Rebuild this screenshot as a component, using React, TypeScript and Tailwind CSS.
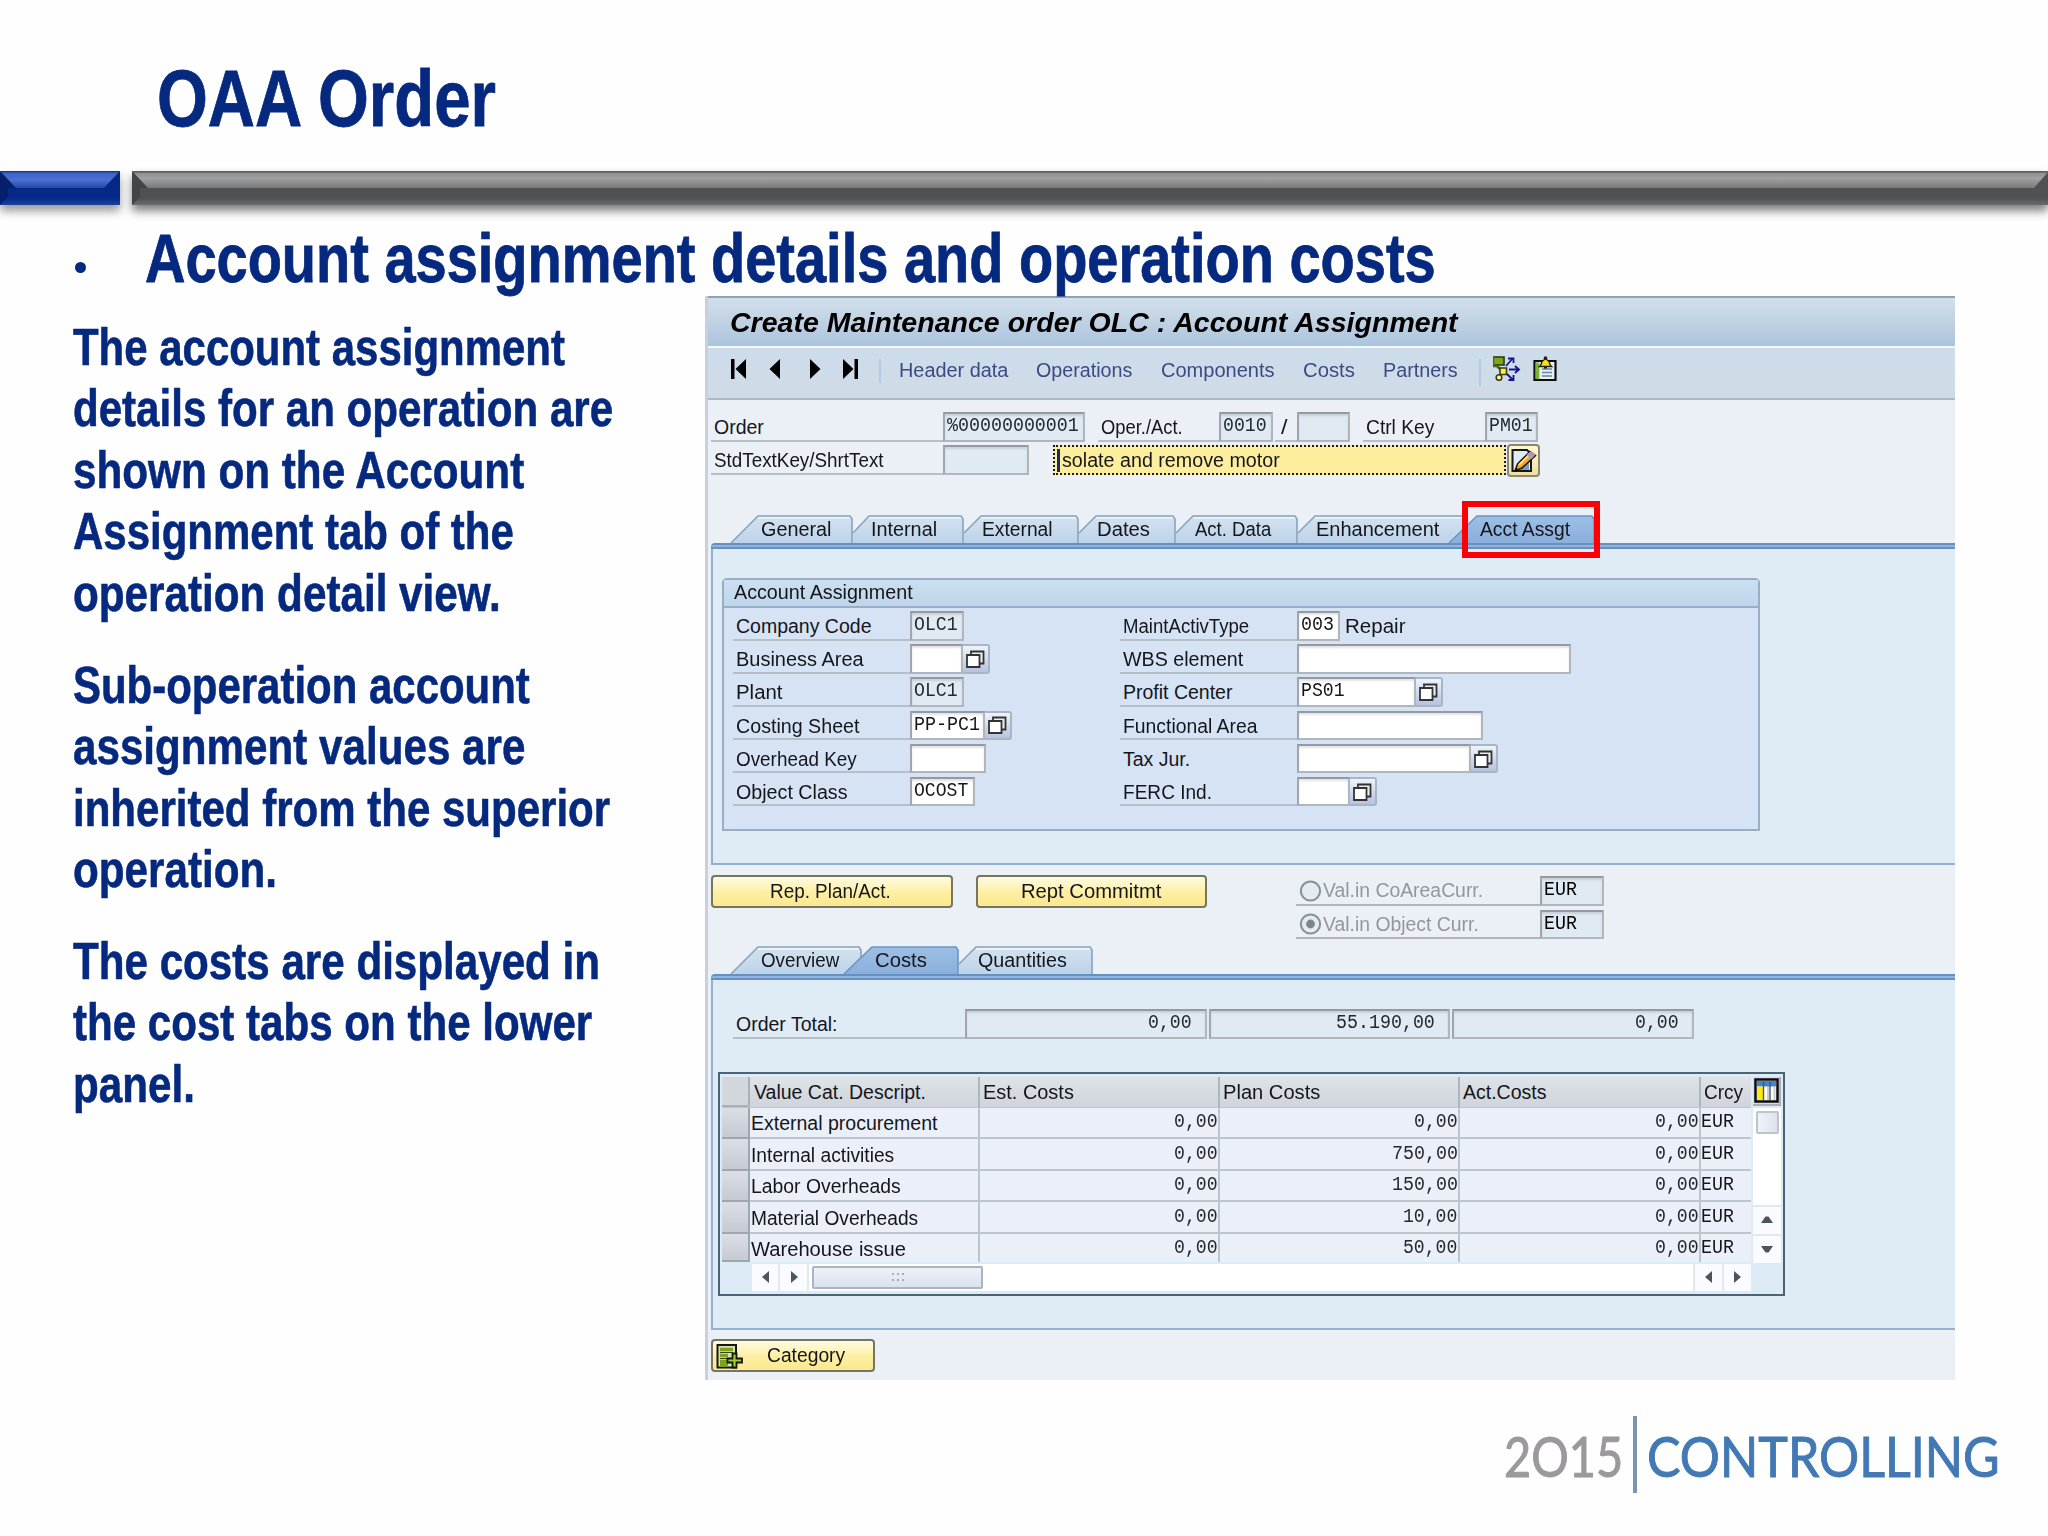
import { useLayoutEffect, useRef, useState, type ReactNode } from "react";

/* Text set to an exact advance width by scaling it horizontally. */
function Fit({ w, children, className = "" }: { w: number; children: ReactNode; className?: string }) {
  const ref = useRef<HTMLSpanElement>(null);
  const [scale, setScale] = useState(1);
  useLayoutEffect(() => {
    if (ref.current) setScale(w / ref.current.offsetWidth);
  }, [w]);
  return (
    <span className={`inline-block shrink-0 whitespace-nowrap ${className}`} style={{ width: w }}>
      <span ref={ref} className="inline-block origin-left" style={{ transform: `scaleX(${scale})` }}>
        {children}
      </span>
    </span>
  );
}

const MONO = "font-['Liberation_Mono',monospace]";

function Mono({ children }: { children: string }) {
  return (
    <Fit w={children.length * 10.95} className={`${MONO} text-[19.5px]`}>
      {children}
    </Fit>
  );
}

function Label({ text, w, className = "" }: { text: string; w: number; className?: string }) {
  return (
    <div className={`flex h-[29.5px] shrink-0 items-center border-b-2 border-[#b4bfc6] pt-[4px] pl-[3px] ${className}`}>
      <Fit w={w}>{text}</Fit>
    </div>
  );
}

function Field({ className = "", ro = false, children }: { className?: string; ro?: boolean; children?: ReactNode }) {
  return (
    <div
      className={`flex h-[29.5px] shrink-0 items-center border-2 border-[#b0b6bb] border-t-[#949a9f] border-l-[#a0a6ab] pl-[2px] ${
        ro ? "bg-[#dfeaf3] text-[#25282c]" : "bg-white"
      } shadow-[inset_0_2px_2px_rgba(90,100,110,0.18)] ${className}`}
    >
      {children}
    </div>
  );
}

function MatchButton() {
  return (
    <div className="flex h-[29.5px] w-[27px] shrink-0 items-center justify-center rounded-r-[3px] border-2 border-l-0 border-[#a9b4c4] bg-gradient-to-b from-[#eef4fa] to-[#b6c3df] pr-[2px]">
      <svg width="20" height="20" viewBox="0 0 20 20">
        <path d="M6 2.5H18.5V14.5H6Z" fill="#e9edf0" stroke="#333" strokeWidth="1.8" />
        <path d="M2 6H14.5V18H2Z" fill="#fff" stroke="#333" strokeWidth="1.8" />
      </svg>
    </div>
  );
}

type TabProps = {
  text: string;
  width: number;
  slant: number;
  cut?: number;
  pad: number;
  tw: number;
  active?: boolean;
  className?: string;
  children?: ReactNode;
};

function Tab({ text, width, slant, cut = 28, pad, tw, active, className = "", children }: TabProps) {
  return (
    <div className={`relative h-[28px] shrink-0 ${className}`} style={{ width }}>
      <svg className="absolute top-0 left-0 overflow-visible" width={width} height="28">
        <defs>
          <linearGradient id={`tab-${text.replace(/\W/g, "")}`} x1="0" y1="0" x2="0" y2="1">
            <stop offset="0" stopColor={active ? "#9dbfe4" : "#d3e2ef"} />
            <stop offset="1" stopColor={active ? "#8aafdc" : "#bdd3ea"} />
          </linearGradient>
        </defs>
        <path
          d={`M0 28V${cut}L${slant} 1H${width - 3}L${width - 1} 4V28Z`}
          fill={`url(#tab-${text.replace(/\W/g, "")})`}
        />
        <path
          d={`M0 ${cut}L${slant} 1H${width - 3}L${width - 1} 4V28`}
          fill="none"
          stroke={active ? "#6b95c4" : "#86a3bf"}
          strokeWidth="1.6"
        />
        {!active && <path d={`M${slant} 2.8H${width - 3}`} stroke="#f2f8fc" strokeWidth="1.5" />}
      </svg>
      <div className="relative flex h-[28px] items-center pt-[2px]" style={{ paddingLeft: pad }}>
        <Fit w={tw}>{text}</Fit>
      </div>
      {children}
    </div>
  );
}

function TabBar() {
  return <div className="ml-[3px] h-[6px] rounded-tl-[4px] border-y-2 border-[#6690c0] bg-[#8fb4df]" />;
}

function YellowButton({ text, w, className = "", icon }: { text: string; w: number; className?: string; icon?: ReactNode }) {
  return (
    <div
      className={`flex h-[33px] shrink-0 items-center rounded-[4px] border-2 border-[#77755f] bg-gradient-to-b from-[#fffbe4] via-[#fdf0a5] to-[#fbe88f] ${className}`}
    >
      {icon}
      <Fit w={w} className="pt-[1px]">
        {text}
      </Fit>
    </div>
  );
}

function Arrow({ dir, className = "" }: { dir: "l" | "r" | "u" | "d"; className?: string }) {
  const d = { l: "M11 1V13L4 7Z", r: "M4 1V13L11 7Z", u: "M1 10H13L8.5 3.5H5.5Z", d: "M1 4H13L8.5 10.5H5.5Z" }[dir];
  return (
    <div className={`flex items-center justify-center border-[#e3e7ef] bg-[#fafbfe] ${className}`}>
      <svg width="14" height="14" viewBox="0 0 14 14">
        <path d={d} fill="#4b5560" />
      </svg>
    </div>
  );
}

function Radio({ on, text, w }: { on?: boolean; text: string; w: number }) {
  return (
    <div className="flex">
      <div className="flex h-[29.5px] w-[244px] items-center border-b-2 border-[#b3b7bc] pt-[2px] pl-[3px]">
        <svg width="24" height="24" viewBox="0 0 24 24" className="shrink-0">
          <circle cx="11.5" cy="12" r="9.6" fill="#e4ecf3" stroke="#8b9096" strokeWidth="2" />
          {on && <circle cx="11.5" cy="12" r="4.4" fill="#7d848b" />}
        </svg>
        <Fit w={w} className="text-[#93979d]">
          {text}
        </Fit>
      </div>
      <Field ro className="w-[64px] text-black">
        <Mono>EUR</Mono>
      </Field>
    </div>
  );
}

type Row = {
  label: string;
  w: number;
  value?: string;
  ro?: boolean;
  box: string;
  match?: boolean;
  after?: string;
  plain?: boolean;
};

const LEFT_ROWS: Row[] = [
  { label: "Company Code", w: 136, value: "OLC1", ro: true, box: "w-[54px]" },
  { label: "Business Area", w: 128, box: "w-[53px]", match: true },
  { label: "Plant", w: 46, value: "OLC1", ro: true, box: "w-[54px]" },
  { label: "Costing Sheet", w: 124, value: "PP-PC1", box: "w-[75px]", match: true },
  { label: "Overhead Key", w: 121, box: "w-[76px]" },
  { label: "Object Class", w: 112, value: "OCOST", box: "w-[65px]" },
];

const RIGHT_ROWS: Row[] = [
  { label: "MaintActivType", w: 126, value: "003", box: "w-[43px]", after: "Repair" },
  { label: "WBS element", w: 120, box: "w-[274px]" },
  { label: "Profit Center", w: 109, value: "PS01", box: "w-[119px]", match: true },
  { label: "Functional Area", w: 135, box: "w-[186px]" },
  { label: "Tax Jur.", w: 67, box: "w-[174px]", match: true, plain: true },
  { label: "FERC Ind.", w: 89, box: "w-[53px]", match: true },
];

function Rows({ rows }: { rows: Row[] }) {
  return (
    <div className="flex w-[387px] shrink-0 flex-col gap-[3.7px]">
      {rows.map((r) => (
        <div key={r.label} className="flex items-center">
          <Label text={r.label} w={r.w} className={r.plain ? "w-[177px] border-transparent" : "w-[177px]"} />
          <Field ro={r.ro} className={r.box}>
            {r.value && <Mono>{r.value}</Mono>}
          </Field>
          {r.match && <MatchButton />}
          {r.after && (
            <Fit w={60} className="ml-[5px] pt-[2px]">
              {r.after}
            </Fit>
          )}
        </div>
      ))}
    </div>
  );
}

const COSTS = [
  { name: "External procurement", w: 186, est: "0,00", plan: "0,00", act: "0,00" },
  { name: "Internal activities", w: 143, est: "0,00", plan: "750,00", act: "0,00" },
  { name: "Labor Overheads", w: 150, est: "0,00", plan: "150,00", act: "0,00" },
  { name: "Material Overheads", w: 167, est: "0,00", plan: "10,00", act: "0,00" },
  { name: "Warehouse issue", w: 155, est: "0,00", plan: "50,00", act: "0,00" },
];

const BODY: [string, number][][] = [
  [
    ["The account assignment", 492],
    ["details for an operation are", 540],
    ["shown on the Account", 451],
    ["Assignment tab of the", 441],
    ["operation detail view.", 428],
  ],
  [
    ["Sub-operation account", 457],
    ["assignment values are", 452],
    ["inherited from the superior", 537],
    ["operation.", 204],
  ],
  [
    ["The costs are displayed in", 527],
    ["the cost tabs on the lower", 519],
    ["panel.", 122],
  ],
];

function TitleRule() {
  return (
    <div className="flex h-[34px] gap-[12px]">
      <svg width="120" height="34" className="overflow-visible drop-shadow-[0_6px_5px_rgba(0,0,0,0.4)]">
        <defs>
          <linearGradient id="blueTop" x1="0" y1="0" x2="0" y2="1">
            <stop offset="0" stopColor="#3a62c6" />
            <stop offset="0.5" stopColor="#4a70d2" />
            <stop offset="1" stopColor="#2448a6" />
          </linearGradient>
          <linearGradient id="blueLow" x1="0" y1="0" x2="0" y2="1">
            <stop offset="0" stopColor="#06277f" />
            <stop offset="0.8" stopColor="#06298a" />
            <stop offset="1" stopColor="#1c439f" />
          </linearGradient>
        </defs>
        <path d="M0 0H120V34H0Z" fill="url(#blueLow)" />
        <path d="M0 0V34L8 26V17L16 17Z" fill="#04206c" />
        <path d="M1 1H119L104 17H16Z" fill="url(#blueTop)" />
        <path d="M0 .8H120" stroke="#1a3a8e" strokeWidth="1.5" />
      </svg>
      <svg width="1916" height="34" className="overflow-visible drop-shadow-[0_6px_5px_rgba(0,0,0,0.5)]">
        <defs>
          <linearGradient id="grayTop" x1="0" y1="0" x2="0" y2="1">
            <stop offset="0" stopColor="#8d8d8e" />
            <stop offset="0.4" stopColor="#a0a0a1" />
            <stop offset="1" stopColor="#78797a" />
          </linearGradient>
          <linearGradient id="grayLow" x1="0" y1="0" x2="0" y2="1">
            <stop offset="0" stopColor="#4f5052" />
            <stop offset="0.8" stopColor="#505153" />
            <stop offset="1" stopColor="#6a6b6c" />
          </linearGradient>
        </defs>
        <path d="M0 0H1916V34H0Z" fill="url(#grayLow)" />
        <path d="M0 0V34L8 26V17L16 17Z" fill="#434445" />
        <path d="M1 1H1916L1902 17H16Z" fill="url(#grayTop)" />
        <path d="M0 .8H1916" stroke="#5f6061" strokeWidth="1.8" />
      </svg>
    </div>
  );
}

function Toolbar() {
  return (
    <div className="flex h-[54px] border-t-2 border-b-2 border-t-[#f3f8fc] border-b-[#aab9c6] bg-gradient-to-b from-[#cddceb] to-[#d0dbe6] pl-[23px] text-[#3c4a84]">
      <svg width="128" height="22" viewBox="0 0 128 22" className="mt-[10px] shrink-0" fill="#000">
        <path d="M0 1H3.5V21H0ZM15 1V21L4.5 11Z" />
        <path d="M49 1V21L38.5 11Z" />
        <path d="M79 1V21L89.500 11Z" />
        <path d="M112 1V21L122.500 11ZM123.500 1H127V21H123.500Z" />
      </svg>
      <div className="mt-[11px] ml-[20px] h-[24px] w-[2px] shrink-0 bg-[#b4cae4]" />
      <div className="flex h-[46px] items-center pl-[18px]">
        <Fit w={109}>Header data</Fit>
        <Fit w={96} className="ml-[28px]">Operations</Fit>
        <Fit w={114} className="ml-[29px]">Components</Fit>
        <Fit w={52} className="ml-[28px]">Costs</Fit>
        <Fit w={75} className="ml-[28px]">Partners</Fit>
      </div>
      <div className="mt-[11px] ml-[21px] h-[27px] w-[2px] shrink-0 bg-[#b4cae4]" />
      <svg width="28" height="26" viewBox="0 0 28 26" className="mt-[7px] ml-[12px] shrink-0">
        <path d="M0 2H11V10H0Z" fill="#7fa51c" stroke="#27330a" strokeWidth="1.6" />
        <path d="M0 2V11H4L7 14" fill="none" stroke="#4c6412" strokeWidth="2.500" />
        <path d="M7 13H13.500V19.500H7Z" fill="#fdf33a" stroke="#3a3a12" strokeWidth="1.600" />
        <circle cx="6" cy="22.500" r="2.800" fill="#fbf59a" stroke="#3a3a12" strokeWidth="1.500" />
        <path d="M13 11L20 3M15 3.500H20.500V8M16 14.500H25M22 11L26 14.500L22 18M14 19L20 25M20.500 20V25H15.500" fill="none" stroke="#16168c" strokeWidth="1.800" />
      </svg>
      <svg width="24" height="26" viewBox="0 0 24 26" className="mt-[7px] ml-[12px] shrink-0">
        <path d="M1.500 6H22.500V25H1.500Z" fill="#e6eef6" stroke="#0c0c0c" strokeWidth="2.200" />
        <path d="M4.500 7.500V24" stroke="#7fb332" strokeWidth="3.600" />
        <path d="M9 14H19M9 17.500H19M9 21H19" stroke="#6884a4" strokeWidth="1.500" />
        <path d="M6.500 11.500C8 10.500 8.500 9 9 6.500L12.500 3.500L16 6.500C16.500 9 17 10.500 18.500 11.500Z" fill="#f6e11c" stroke="#222208" strokeWidth="1.300" />
        <circle cx="12.500" cy="3" r="1.800" fill="#222208" />
        <path d="M11 12.500H14" stroke="#222208" strokeWidth="2.200" />
      </svg>
    </div>
  );
}

function CostTable() {
  const line = "border-[#bcc4cc]";
  return (
    <div className="mt-[33px] ml-[5px] h-[224px] w-[1067px] border-2 border-[#4c6375] bg-[#dcebf5] pt-[3px] pl-[2px]">
      <div className="flex gap-[2px]">
        <div className="w-[1029px]">
          <div className="flex h-[31px] border-b border-[#bcc4cc] bg-gradient-to-b from-[#dfe3e8] to-[#cfd4dc]">
            <div className="w-[28px] shrink-0 border-r-2 border-b-2 border-[#a9b0ba] bg-[#d2d7de]" />
            <div className="flex w-[230px] shrink-0 items-center border-r-2 border-[#adb5be] pt-[2px] pl-[4px]">
              <Fit w={172}>Value Cat. Descript.</Fit>
            </div>
            <div className="flex w-[240px] shrink-0 items-center border-r-2 border-[#adb5be] pt-[2px] pl-[3px]">
              <Fit w={91}>Est. Costs</Fit>
            </div>
            <div className="flex w-[240px] shrink-0 items-center border-r-2 border-[#adb5be] pt-[2px] pl-[3px]">
              <Fit w={97}>Plan Costs</Fit>
            </div>
            <div className="flex w-[241px] shrink-0 items-center border-r-2 border-[#adb5be] pt-[2px] pl-[3px]">
              <Fit w={83}>Act.Costs</Fit>
            </div>
            <div className="flex grow items-center pt-[2px] pl-[3px]">
              <Fit w={39}>Crcy</Fit>
            </div>
          </div>
          {COSTS.map((r, i) => (
            <div key={r.name} className={`flex bg-[#ebf0f8] ${i === 4 ? "h-[28.5px]" : "h-[31.6px]"}`}>
              <div className="w-[28px] shrink-0 border-r-2 border-b-2 border-[#9ea6b1] bg-gradient-to-b from-[#dbdfe5] to-[#c5cad3]" />
              <div className={`flex w-[230px] shrink-0 items-center border-r-2 pl-[1px] ${i < 4 ? "border-b-2" : ""} ${line}`}>
                <Fit w={r.w} className="pt-[3px]">
                  {r.name}
                </Fit>
              </div>
              {[r.est, r.plan, r.act].map((v, c) => (
                <div
                  key={c}
                  className={`flex shrink-0 items-center justify-end border-r-2 pt-[1px] text-[#25282c] ${c === 2 ? "w-[241px]" : "w-[240px]"} ${i < 4 ? "border-b-2" : ""} ${line}`}
                >
                  <Mono>{v}</Mono>
                </div>
              ))}
              <div className={`flex grow items-center pt-[1px] ${i < 4 ? "border-b-2" : ""} ${line}`}>
                <Mono>EUR</Mono>
              </div>
            </div>
          ))}
        </div>
        <div className="flex w-[28px] flex-col">
          <div className="flex h-[29px] items-center justify-center border-r-2 border-b-2 border-[#aab0b8] bg-[#d6dce4]">
            <svg width="25" height="25" viewBox="0 0 25 25">
              <path d="M1.500 1.500H23.500V23.500H1.500Z" fill="#fff" stroke="#0b0b0b" strokeWidth="2.500" />
              <path d="M3 3H22V8.500H3Z" fill="#3f86cf" />
              <path d="M3 8.500H9V22H3Z" fill="#ffea12" />
              <path d="M9.500 4V22M16 4V22" stroke="#4c565e" strokeWidth="1.400" />
              <path d="M14 9V22M20.500 9V22" stroke="#c9ced2" strokeWidth="2" />
            </svg>
          </div>
          <div className="mt-[2px] flex h-[97px] justify-center bg-white pt-[3px]">
            <div className="h-[23px] w-[23px] rounded-[2px] border-2 border-[#bcc4d0] bg-gradient-to-r from-[#f0f3f8] to-[#dce3ed]" />
          </div>
          <Arrow dir="u" className="h-[29px] border-t-2" />
          <Arrow dir="d" className="h-[29px] border-t-2" />
        </div>
      </div>
      <div className="mt-[1px] ml-[30px] flex h-[27px] w-[999px] bg-white">
        <Arrow dir="l" className="w-[28px] border-r-2" />
        <Arrow dir="r" className="w-[29px] border-r-2" />
        <div className="mt-[2px] ml-[3px] flex h-[23px] w-[171px] items-center justify-center rounded-[2px] border-2 border-[#a9b4c4] bg-gradient-to-b from-[#eef2f8] to-[#dbe2ed]">
          <svg width="14" height="10" viewBox="0 0 14 10" stroke="#a2acba" strokeWidth="1.800">
            <path d="M1 2H3M6 2H8M11 2H13M1 8H3M6 8H8M11 8H13" />
          </svg>
        </div>
        <div className="grow" />
        <Arrow dir="l" className="w-[29px] border-l-2 pr-[2px]" />
        <Arrow dir="r" className="w-[29px] border-l-2 pr-[2px]" />
      </div>
    </div>
  );
}

function SapWindow() {
  return (
    <div className="h-[1084px] w-[1250px] shrink-0 border-l-3 border-[#c9cfdb] bg-[#ebf0f7] text-[19.5px] leading-none text-[#15161c]">
      <div className="flex h-[50px] items-center border-t-2 border-[#8fa2b6] bg-gradient-to-b from-[#d2dfed] via-[#c0d2e2] to-[#abc4df] pt-[1px] pl-[22px] text-[28px] font-bold text-black italic">
        <Fit w={728}>Create Maintenance order OLC : Account Assignment</Fit>
      </div>
      <Toolbar />
      <div className="flex h-[115px] flex-col gap-[3.500px] pt-[12px] pl-[3px]">
        <div className="flex">
          <Label text="Order" w={50} className="w-[232px]" />
          <Field ro className="w-[142px]">
            <Mono>%00000000001</Mono>
          </Field>
          <Label text="Oper./Act." w={82} className="ml-[13px] w-[121px]" />
          <Field ro className="w-[54px]">
            <Mono>0010</Mono>
          </Field>
          <Label text="/" w={6} className="ml-[2px] w-[22px] pl-[6px]" />
          <Field ro className="w-[53px]" />
          <Label text="Ctrl Key" w={68} className="ml-[13px] w-[122px]" />
          <Field ro className="w-[53px]">
            <Mono>PM01</Mono>
          </Field>
        </div>
        <div className="flex">
          <Label text="StdTextKey/ShrtText" w={170} className="w-[232px]" />
          <Field ro className="w-[86px]" />
          <div className="ml-[24px] flex h-[30px] w-[453px] items-center border-2 border-dotted border-[#1c1c10] bg-[#fcee9c] pl-[2px]">
            <div className="h-[23px] w-[3px] bg-[#122a7a]" />
            <Fit w={218} className="ml-[2px] pt-[2px]">
              solate and remove motor
            </Fit>
          </div>
          <div className="-mt-[1px] ml-[1px] flex h-[33px] w-[33px] items-center justify-center rounded-[4px] border-2 border-[#8a8772] bg-gradient-to-b from-[#fff8d0] to-[#efe0a0]">
            <svg width="28" height="27" viewBox="0 0 28 27">
              <path d="M2.500 3H17L21 7V24H2.500Z" fill="#dfeaf5" stroke="#14171c" strokeWidth="2" />
              <path d="M19 8V23H10Z" fill="#7f9cc4" />
              <path d="M5 24L7.500 17L20 4.500L25.500 8.500L12 21Z" fill="#f4a52a" stroke="#1b1508" strokeWidth="1.500" />
              <path d="M18 6.500L21 4L25.500 7.500L22.500 11Z" fill="#c98ba0" />
              <path d="M16.500 8L18.500 6L22.800 10.500L20.500 12.500Z" fill="#8fa9d6" />
              <path d="M9 18L18 9" stroke="#ffe08a" strokeWidth="1.800" />
              <path d="M4.500 24.500L6 20.500L9 23Z" fill="#111" />
            </svg>
          </div>
        </div>
      </div>

      <div className="flex pl-[23px]">
        <Tab text="General" width={122} slant={27} pad={30} tw={70} />
        <Tab text="Internal" width={111} slant={16} cut={18} pad={18} tw={66} />
        <Tab text="External" width={115} slant={17} cut={18} pad={18} tw={71} />
        <Tab text="Dates" width={97} slant={17} cut={18} pad={18} tw={53} />
        <Tab text="Act. Data" width={122} slant={17} cut={18} pad={19} tw={76} />
        <Tab text="Enhancement" width={168} slant={17} cut={18} pad={18} tw={123} />
        <Tab text="Acct Assgt" width={146} slant={28} pad={31} tw={90} active className="-ml-[17px]">
          <div className="absolute -top-[14px] left-[13px] h-[57px] w-[138px] border-[6px] border-[#fb0007]" />
        </Tab>
      </div>
      <TabBar />
      <div className="ml-[3px] h-[316px] border-b-2 border-l-2 border-[#93b1d2] bg-[#dfebf5] pt-[29px] pl-[9px]">
        <div className="h-[253px] w-[1038px] rounded-t-[5px] border-2 border-[#97adc8] bg-[#d5e3f5]">
          <div className="flex h-[28px] items-center border-b-2 border-[#97adc8] bg-gradient-to-b from-[#cddff0] to-[#bfd5ea] pb-[1px] pl-[10px]">
            <Fit w={179}>Account Assignment</Fit>
          </div>
          <div className="flex pt-[3px] pl-[9px]">
            <Rows rows={LEFT_ROWS} />
            <Rows rows={RIGHT_ROWS} />
          </div>
        </div>
      </div>

      <div className="flex h-[81px] pl-[3px]">
        <YellowButton text="Rep. Plan/Act." w={121} className="mt-[10px] w-[242px] pl-[57px]" />
        <YellowButton text="Rept Commitmt" w={140} className="mt-[10px] ml-[23px] w-[231px] pl-[43px]" />
        <div className="mt-[11px] ml-[89px] flex flex-col gap-[4px]">
          <Radio text="Val.in CoAreaCurr." w={160} />
          <Radio on text="Val.in Object Curr." w={156} />
        </div>
      </div>

      <div className="flex pl-[23px]">
        <Tab text="Overview" width={131} slant={27} pad={30} tw={78} />
        <Tab text="Costs" width={115} slant={28} pad={31} tw={52} active className="-ml-[18px]" />
        <Tab text="Quantities" width={134} slant={17} cut={18} pad={19} tw={89} />
      </div>
      <TabBar />
      <div className="ml-[3px] h-[350px] border-b-2 border-l-2 border-[#93b1d2] bg-[#dfebf5] pt-[29px]">
        <div className="flex pl-[20px]">
          <Label text="Order Total:" w={102} className="w-[232px]" />
          <Field ro className="w-[242px] justify-end pr-[13px]">
            <Mono>0,00</Mono>
          </Field>
          <Field ro className="ml-[2px] w-[241px] justify-end pr-[13px]">
            <Mono>55.190,00</Mono>
          </Field>
          <Field ro className="ml-[2px] w-[242px] justify-end pr-[13px]">
            <Mono>0,00</Mono>
          </Field>
        </div>
        <CostTable />
      </div>

      <YellowButton
        text="Category"
        w={78}
        className="mt-[9px] ml-[3px] w-[164px] pl-[3px]"
        icon={
          <svg width="28" height="26" viewBox="0 0 28 26" className="mr-[23px] shrink-0">
            <path d="M1.500 2H20V24.500H1.500Z" fill="#d8e2b0" stroke="#14170c" strokeWidth="2" />
            <path d="M4 6.500H17M4 12.500H12M4 18.500H12M4 22H12" stroke="#7da31b" strokeWidth="3.600" />
            <path d="M4 9.500H17M4 15.500H11" stroke="#39451a" strokeWidth="1.200" />
            <path d="M16.500 10.500H20.500V15.500H26V19.500H20.500V24.500H16.500V19.500H11.500V15.500H16.500Z" fill="#a3cf2e" stroke="#14170c" strokeWidth="1.800" />
          </svg>
        }
      />
    </div>
  );
}

export default function App() {
  return (
    <div className="h-[1536px] w-[2048px] overflow-hidden bg-[#fefefe] font-['Liberation_Sans',Arial,sans-serif]">
      <div className="flex h-[171px] items-start pt-[57px] pl-[157px] text-[80px] leading-[83px] font-bold text-[#05297f] [-webkit-text-stroke:0.8px_#05297f]">
        <Fit w={339}>OAA Order</Fit>
      </div>
      <TitleRule />
      <div className="flex h-[91px] items-start pt-[14px] pl-[75px] text-[68.5px] leading-[80px] font-bold text-[#05297f] [-webkit-text-stroke:0.8px_#05297f]">
        <div className="mt-[43px] mr-[59px] h-[11px] w-[11px] rounded-full bg-[#05297f]" />
        <Fit w={1291}>Account assignment details and operation costs</Fit>
      </div>
      <div className="flex">
        <div className="flex w-[705px] shrink-0 flex-col gap-[30.700px] pt-[21px] pl-[73px] text-[51.5px] leading-[61.400px] font-bold text-[#05297f] [-webkit-text-stroke:0.6px_#05297f]">
          {BODY.map((lines, i) => (
            <p key={i} className="flex flex-col">
              {lines.map(([t, w]) => (
                <Fit key={t} w={w}>
                  {t}
                </Fit>
              ))}
            </p>
          ))}
        </div>
        <SapWindow />
      </div>
      <div className="mt-[36px] flex h-[77px] items-start pl-[1504px] font-['Lato',sans-serif] text-[56px] leading-[79px]">
        <Fit w={119} className="text-[#9b999b] [-webkit-text-stroke:1px_#9b999b]">
          2O15
        </Fit>
        <div className="mx-[10px] h-[77px] w-[4px] bg-[#7c94b4]" />
        <Fit w={353} className="text-[#4279b5] [-webkit-text-stroke:1px_#4279b5]">
          CONTROLLING
        </Fit>
      </div>
    </div>
  );
}
